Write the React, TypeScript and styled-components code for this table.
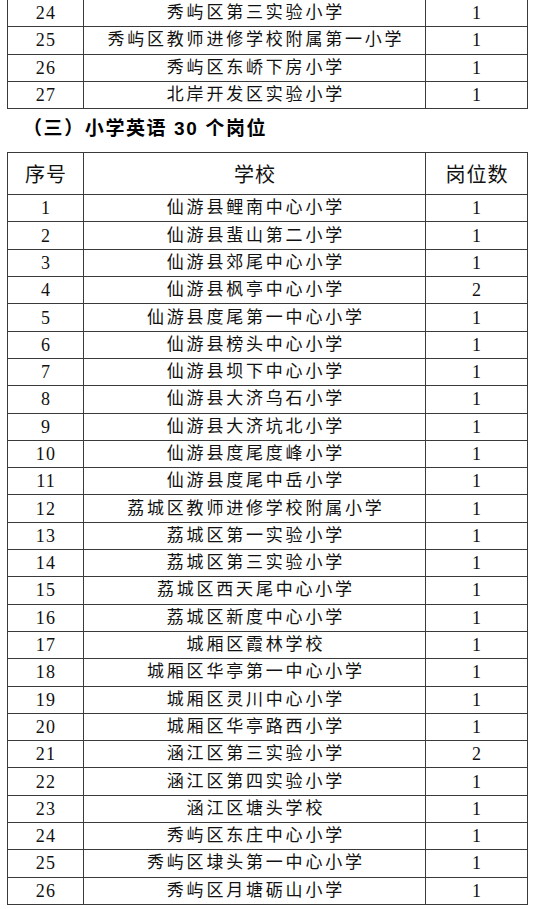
import styled, { createGlobalStyle } from "styled-components";

const GlobalStyle = createGlobalStyle`
  html, body {
    margin: 0;
    padding: 0;
    background: #eeeeee;
  }
  body {
    font-family: "Liberation Serif", "Noto Sans CJK SC", serif;
    color: #111;
  }
`;

type Row = [number, string, number];

const previous: Row[] = [
  [24, "秀屿区第三实验小学", 1],
  [25, "秀屿区教师进修学校附属第一小学", 1],
  [26, "秀屿区东峤下房小学", 1],
  [27, "北岸开发区实验小学", 1],
];

const english: Row[] = [
  [1, "仙游县鲤南中心小学", 1],
  [2, "仙游县蜚山第二小学", 1],
  [3, "仙游县郊尾中心小学", 1],
  [4, "仙游县枫亭中心小学", 2],
  [5, "仙游县度尾第一中心小学", 1],
  [6, "仙游县榜头中心小学", 1],
  [7, "仙游县坝下中心小学", 1],
  [8, "仙游县大济乌石小学", 1],
  [9, "仙游县大济坑北小学", 1],
  [10, "仙游县度尾度峰小学", 1],
  [11, "仙游县度尾中岳小学", 1],
  [12, "荔城区教师进修学校附属小学", 1],
  [13, "荔城区第一实验小学", 1],
  [14, "荔城区第三实验小学", 1],
  [15, "荔城区西天尾中心小学", 1],
  [16, "荔城区新度中心小学", 1],
  [17, "城厢区霞林学校", 1],
  [18, "城厢区华亭第一中心小学", 1],
  [19, "城厢区灵川中心小学", 1],
  [20, "城厢区华亭路西小学", 1],
  [21, "涵江区第三实验小学", 2],
  [22, "涵江区第四实验小学", 1],
  [23, "涵江区塘头学校", 1],
  [24, "秀屿区东庄中心小学", 1],
  [25, "秀屿区埭头第一中心小学", 1],
  [26, "秀屿区月塘砺山小学", 1],
];

const Page = styled.div`
  background: #fff;
  padding: 0 7px 5px 7px;
  overflow: hidden;
`;

const Table = styled.table<{ $first?: boolean }>`
  width: 520px;
  border-collapse: collapse;
  table-layout: fixed;
  margin-top: ${(p) => (p.$first ? "-1px" : "0")};
  border: 1.5px solid #3a3a3a;
`;

const Cell = styled.td<{ $kind: "num" | "name" }>`
  height: 26.3px;
  padding: 0 0 0 ${(p) => (p.$kind === "num" ? "1px" : "2.8px")};
  border: 1px solid #3a3a3a;
  text-align: center;
  vertical-align: middle;
  line-height: 20px;
  font-size: ${(p) => (p.$kind === "num" ? "18px" : "17px")};
  letter-spacing: ${(p) => (p.$kind === "num" ? "1.2px" : "2.8px")};
  white-space: nowrap;
`;

const HeadCell = styled.th`
  height: 41px;
  padding: 0 0 0 1px;
  border: 1px solid #3a3a3a;
  font-weight: normal;
  text-align: center;
  vertical-align: middle;
  font-size: 20px;
  letter-spacing: 1px;
`;

const Heading = styled.h3`
  margin: 7px 0 10px 16px;
  height: 26px;
  line-height: 26px;
  font-family: "Liberation Sans", "Noto Sans CJK SC", sans-serif;
  font-size: 19px;
  font-weight: bold;
  letter-spacing: 1.6px;
  color: #000;
`;

const Rows = ({ rows }: { rows: Row[] }) => (
  <tbody>
    {rows.map(([no, name, count]) => (
      <tr key={no + name}>
        <Cell $kind="num">{no}</Cell>
        <Cell $kind="name">{name}</Cell>
        <Cell $kind="num">{count}</Cell>
      </tr>
    ))}
  </tbody>
);

const Cols = () => (
  <colgroup>
    <col style={{ width: 76 }} />
    <col style={{ width: 342 }} />
    <col style={{ width: 102 }} />
  </colgroup>
);

export default function App() {
  return (
    <>
      <GlobalStyle />
      <Page>
        <Table $first>
          <Cols />
          <Rows rows={previous} />
        </Table>
        <Heading>（三）小学英语 30 个岗位</Heading>
        <Table>
          <Cols />
          <thead>
            <tr>
              <HeadCell>序号</HeadCell>
              <HeadCell>学校</HeadCell>
              <HeadCell>岗位数</HeadCell>
            </tr>
          </thead>
          <Rows rows={english} />
        </Table>
      </Page>
    </>
  );
}
